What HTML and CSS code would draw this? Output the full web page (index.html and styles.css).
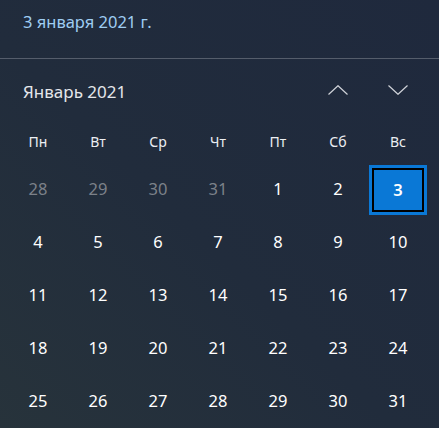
FILE: index.html
```html
<!DOCTYPE html>
<html lang="ru">
<head>
<meta charset="utf-8">
<title>Календарь</title>
<link rel="stylesheet" href="styles.css">
</head>
<body>
<div class="flyout">
  <div class="date-header">3 января 2021 г.</div>
  <div class="month-bar">
    <span class="month-title">Январь 2021</span>
    <div class="nav">
      <span class="nav-btn"><svg width="20" height="10" viewBox="0 0 20 10"><path d="M0.5 9.5 L10 0.7 L19.5 9.5" fill="none" stroke="#cfd2d8" stroke-width="1.2"/></svg></span>
      <span class="nav-btn"><svg width="20" height="10" viewBox="0 0 20 10"><path d="M0.5 0.5 L10 9.3 L19.5 0.5" fill="none" stroke="#cfd2d8" stroke-width="1.2"/></svg></span>
    </div>
  </div>
  <div class="weekdays">
    <span>Пн</span><span>Вт</span><span>Ср</span><span>Чт</span><span>Пт</span><span>Сб</span><span>Вс</span>
  </div>
  <div class="days">
    <span class="day other">28</span><span class="day other">29</span><span class="day other">30</span><span class="day other">31</span><span class="day">1</span><span class="day">2</span><span class="day"><span class="today">3</span></span>
    <span class="day">4</span><span class="day">5</span><span class="day">6</span><span class="day">7</span><span class="day">8</span><span class="day">9</span><span class="day">10</span>
    <span class="day">11</span><span class="day">12</span><span class="day">13</span><span class="day">14</span><span class="day">15</span><span class="day">16</span><span class="day">17</span>
    <span class="day">18</span><span class="day">19</span><span class="day">20</span><span class="day">21</span><span class="day">22</span><span class="day">23</span><span class="day">24</span>
    <span class="day">25</span><span class="day">26</span><span class="day">27</span><span class="day">28</span><span class="day">29</span><span class="day">30</span><span class="day">31</span>
  </div>
</div>
</body>
</html>
```
FILE: styles.css
```css
html, body {
  margin: 0;
  padding: 0;
}
body {
  width: 439px;
  height: 428px;
  overflow: hidden;
  font-family: "Noto Sans", "Open Sans", sans-serif;
}
.flyout {
  width: 439px;
  height: 428px;
  background: linear-gradient(to top right, #27333b 0%, #212c3c 45%, #1f293d 100%);
  color: #fff;
}
.date-header {
  box-sizing: border-box;
  height: 59px;
  padding: 11px 0 0 23px;
  font-size: 16.5px;
  line-height: 22px;
  color: #9fcdf2;
  border-bottom: 1px solid #555d6b;
}
.month-bar {
  height: 68px;
  display: flex;
  align-items: center;
  justify-content: space-between;
  padding-left: 23px;
}
.month-title {
  font-size: 17px;
  color: #e4e6ea;
  padding-bottom: 4px;
}
.nav {
  display: flex;
  height: 100%;
}
.nav-btn {
  width: 60px;
  display: flex;
  align-items: center;
  justify-content: center;
  margin-top: -6px;
}
.nav-btn:last-child {
  margin-right: 11px;
}
.weekdays {
  display: grid;
  grid-template-columns: repeat(7, 60px);
  margin-left: 8px;
  height: 28px;
  align-items: center;
  font-size: 14px;
  color: #eceef2;
}
.weekdays span {
  text-align: center;
}
.days {
  display: grid;
  grid-template-columns: repeat(7, 60px);
  grid-auto-rows: 53px;
  margin: 7px 0 0 8px;
}
.day {
  display: flex;
  align-items: center;
  justify-content: center;
  font-size: 16.5px;
  color: #fff;
}
.day.other {
  color: #7c8189;
}
.today {
  box-sizing: border-box;
  width: 58px;
  height: 50px;
  margin-top: 2px;
  display: flex;
  align-items: center;
  justify-content: center;
  background: #0a78d6;
  border: 3px solid #0a78d6;
  box-shadow: inset 0 0 0 2px #000;
  font-weight: 600;
  color: #fff;
}
```
